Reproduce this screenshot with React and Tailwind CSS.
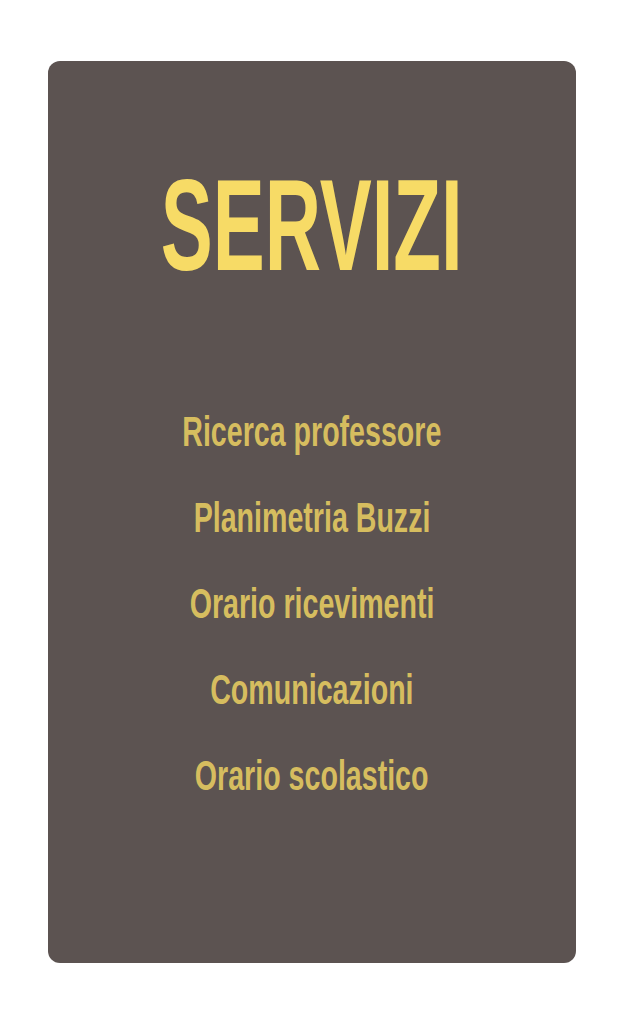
const SERVIZI = [
  "Ricerca professore",
  "Planimetria Buzzi",
  "Orario ricevimenti",
  "Comunicazioni",
  "Orario scolastico",
];

const App = () => {
  return (
    <div className="min-h-[1024px] bg-white pt-[61px] px-[48px] font-['Liberation_Sans',Arial,sans-serif]">
      <div className="h-[902px] w-[528px] rounded-[12px] bg-[#5c5351] flex flex-col items-center pt-[99px]">
        <h1 className="text-[130px] leading-none font-bold text-[#f7db66] inline-block scale-x-[0.6] whitespace-nowrap">
          SERVIZI
        </h1>
        <ul className="mt-[98px] flex flex-col items-center">
          {SERVIZI.map((s) => (
            <li
              key={s}
              className="h-[86px] text-[43px] leading-[86px] font-bold text-[#d6bd5f] inline-block scale-x-[0.665] whitespace-nowrap"
            >
              {s}
            </li>
          ))}
        </ul>
      </div>
    </div>
  );
};

export default App;
